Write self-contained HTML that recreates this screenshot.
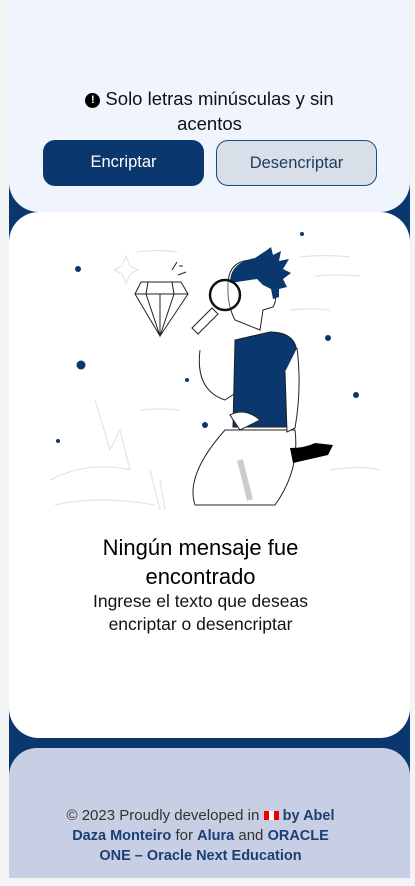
<!DOCTYPE html>
<html><head><meta charset="utf-8"><style>
*{margin:0;padding:0;box-sizing:border-box}
body{width:415px;height:886px;background:#f3f4f4;font-family:"Liberation Sans",sans-serif;position:relative;overflow:hidden}
.wrap{position:absolute;left:9px;top:0;width:401px;height:878px;background:#0a376e}
.top{position:absolute;left:0;top:0;width:401px;height:212px;background:#f0f4fc;border-radius:0 0 30px 30px}
.warn{position:absolute;left:0;width:401px;top:86px;text-align:center;font-size:18.5px;line-height:25px;color:#111}
.btn{position:absolute;top:140px;height:46px;border-radius:12px;font-size:16.5px;text-align:center;line-height:44px}
.b1{left:34px;width:161px;background:#0a376e;color:#fff}
.b2{left:207px;width:161px;background:#d9dfe8;border:1px solid #1c4a80;color:#1f3a5e}
.main{position:absolute;left:0;top:212px;width:401px;height:526px;background:#fff;border-radius:30px}
.foot{position:absolute;left:0;top:748px;width:401px;height:130px;background:#c8cee3;border-radius:28px 28px 0 0}
.h{position:absolute;left:0;width:401px;top:533px;text-align:center;font-size:22px;line-height:29px;color:#000}
.p{position:absolute;left:0;width:401px;top:590px;text-align:center;font-size:17.5px;line-height:23px;color:#111}
.ft{position:absolute;left:0;width:401px;top:806px;text-align:center;font-size:15px;line-height:20px;color:#333}
.ft b{color:#1c3f73;font-weight:bold;font-size:14.5px}
</style></head><body>
<div class="wrap">
<div class="top">
<div class="warn"><span style="display:inline-block;width:15px;height:15px;border-radius:50%;background:#000;color:#fff;font-size:11px;line-height:15px;font-weight:bold;vertical-align:2px">!</span> Solo letras minúsculas y sin<br>acentos</div>
<div class="btn b1">Encriptar</div>
<div class="btn b2">Desencriptar</div>
</div>
<div class="main"></div>
<div class="foot"></div>
</div>
<svg style="position:absolute;left:0;top:0" width="415" height="886" viewBox="0 0 415 886">
<g fill="none" stroke="#e4e4e4" stroke-width="1.2">
<path d="M137 252q20-3 40 0M300 257q25-3 50 0M315 276q20-2 45 0M290 310q20-2 40 0M140 410q20-2 40 0M50 480q40-20 80-10M55 505q40-10 100 0M330 470q30-5 50 0M95 400l15 50 10-20 10 40M150 470l10 40M160 480l5 30"/>
<path d="M126 256l4 10 8 4-8 4-4 10-4-10-8-4 8-4z"/>
</g>
<g fill="#0a376e"><circle cx="78" cy="269" r="3"/><circle cx="81" cy="365" r="4.5"/><circle cx="187" cy="380" r="2"/><circle cx="205" cy="425" r="3"/><circle cx="58" cy="441" r="2"/><circle cx="302" cy="234" r="2"/><circle cx="328" cy="338" r="3"/><circle cx="356" cy="395" r="3"/></g>
<g stroke="#222" stroke-width="1" fill="none"><path d="M141 282h40l7 12-28 42-25-42z M135 294h53 M148 282l-2 12 14 42 14-42-2-12 M160 294v42"/>
<path d="M172 270l5-8M178 275l8-3M183 266l-4 0"/></g>
<path d="M200 350q-5 40 25 50l15-10" fill="#fff" stroke="#222"/>
<path d="M195 505q-10-30 30-75h70q5 40-20 75z" fill="#fff" stroke="#222"/>
<path d="M240 460l10 40" stroke="#ccc" stroke-width="6"/>
<path d="M290 448q15 0 25-5l18 2-5 10-35 8z" fill="#000"/>
<path d="M235 340l35-8q25 0 27 20l-2 75h-62z" fill="#0a376e" stroke="#222"/>
<path d="M297 348q5 40-2 80l-8 4-2-60" fill="#fff" stroke="#222"/>
<path d="M230 415q15-8 30 5l-20 10z" fill="#fff" stroke="#222"/>
<path d="M228 285q0-25 25-25 22 2 22 25l-2 10q5 3 0 12l-10 3-3 20-25-10q-8-15-7-35z" fill="#fff" stroke="#222"/>
<path d="M230 280q2-18 25-22l12-8 4-3 2 8 8-4-2 10 10-2-6 10 8 4-8 6 4 8-8 2 0 8-6 2-2-10-8-4-6-6-27 4z" fill="#0a376e"/>
<path d="M192 328l20-20 6 6-20 20z" fill="#fff" stroke="#222"/>
<circle cx="225" cy="295" r="15" fill="#fff" fill-opacity="0.3" stroke="#111" stroke-width="2.5"/>
</svg>
<div class="h">Ningún mensaje fue<br>encontrado</div>
<div class="p">Ingrese el texto que deseas<br>encriptar o desencriptar</div>
<div class="ft">© 2023 Proudly developed in <span style="display:inline-block;width:15px;height:9px;background:linear-gradient(90deg,#e00 33%,#fff 33%,#fff 66%,#e00 66%)"></span> <b>by Abel<br>Daza Monteiro</b> for <b>Alura</b> and <b>ORACLE<br>ONE – Oracle Next Education</b></div>
</body></html>
